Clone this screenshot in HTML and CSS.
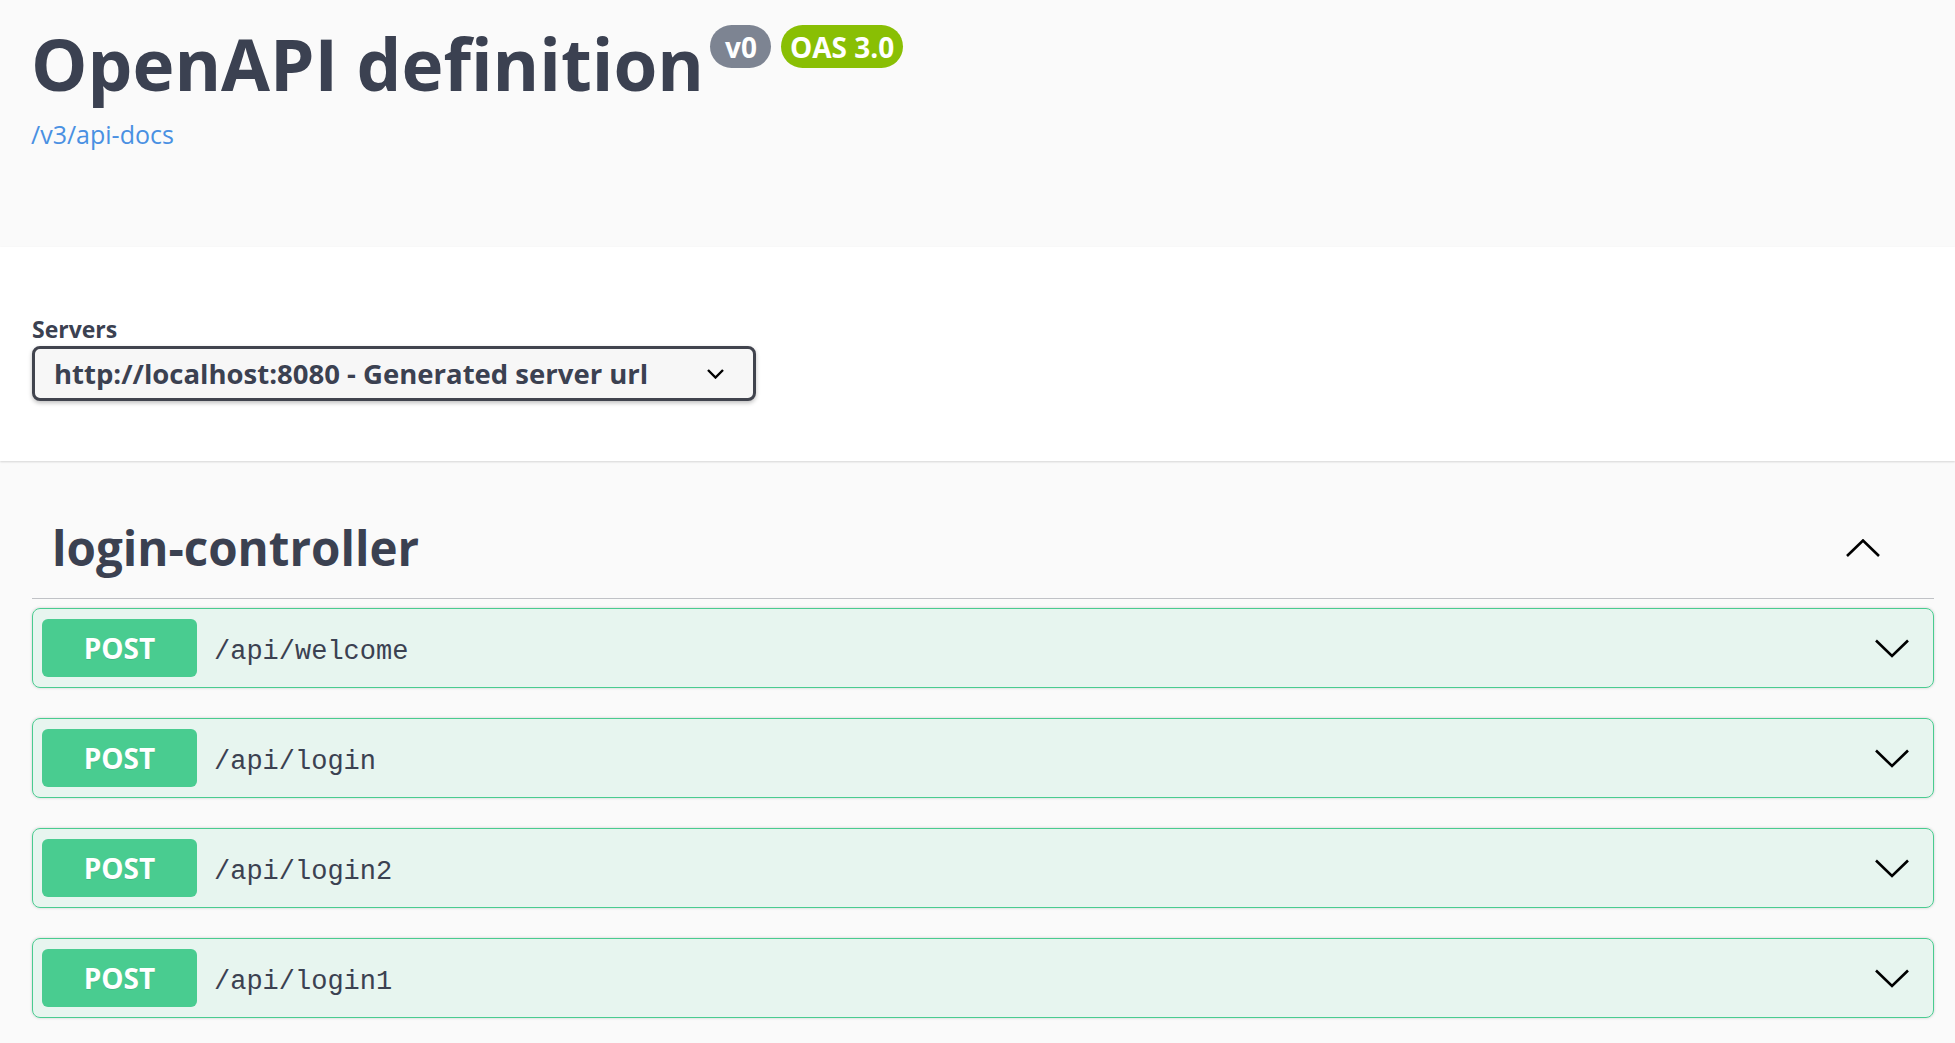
FILE: index.html
```html
<!DOCTYPE html>
<html lang="en">
<head>
<meta charset="utf-8">
<title>Swagger UI</title>
<link rel="stylesheet" href="styles.css">
</head>
<body>
<div class="info">
  <div class="title-row">
    <h2 class="title">OpenAPI definition</h2>
    <div class="badges">
      <span class="badge version">v0</span>
      <span class="badge oas">OAS 3.0</span>
    </div>
  </div>
  <a class="url" href="#">/v3/api-docs</a>
</div>

<div class="scheme">
  <label class="servers-label">Servers</label>
  <div class="select">
    <span>http://localhost:8080 - Generated server url</span>
    <svg class="select-arrow" width="17" height="10" viewBox="0 0 17 10"><path d="M1 1 L8.5 8.5 L16 1" fill="none" stroke="#000" stroke-width="2.4"/></svg>
  </div>
</div>

<div class="ops">
  <div class="tag">
    <h3 class="tag-name">login-controller</h3>
    <svg class="tag-arrow" width="34" height="18" viewBox="0 0 34 18"><path d="M1 17 L17 1.5 L33 17" fill="none" stroke="#000" stroke-width="2.6"/></svg>
  </div>

  <div class="opblock">
    <span class="method">POST</span>
    <span class="path">/api/welcome</span>
    <svg class="op-arrow" width="34" height="19" viewBox="0 0 34 19"><path d="M1 1.5 L17 17 L33 1.5" fill="none" stroke="#000" stroke-width="2.6"/></svg>
  </div>
  <div class="opblock">
    <span class="method">POST</span>
    <span class="path">/api/login</span>
    <svg class="op-arrow" width="34" height="19" viewBox="0 0 34 19"><path d="M1 1.5 L17 17 L33 1.5" fill="none" stroke="#000" stroke-width="2.6"/></svg>
  </div>
  <div class="opblock">
    <span class="method">POST</span>
    <span class="path">/api/login2</span>
    <svg class="op-arrow" width="34" height="19" viewBox="0 0 34 19"><path d="M1 1.5 L17 17 L33 1.5" fill="none" stroke="#000" stroke-width="2.6"/></svg>
  </div>
  <div class="opblock">
    <span class="method">POST</span>
    <span class="path">/api/login1</span>
    <svg class="op-arrow" width="34" height="19" viewBox="0 0 34 19"><path d="M1 1.5 L17 17 L33 1.5" fill="none" stroke="#000" stroke-width="2.6"/></svg>
  </div>
</div>
</body>
</html>
```

FILE: styles.css
```css
html, body {
  margin: 0;
  padding: 0;
}
body {
  background: #fafafa;
  font-family: "Open Sans", "Noto Sans", sans-serif;
  color: #3b4151;
}

.info {
  height: 247px;
  box-sizing: border-box;
  padding: 25px 21px 0 31px;
}
.title-row {
  display: flex;
  align-items: flex-start;
}
.title {
  margin: 3px 0 0;
  font-size: 71px;
  line-height: 72px;
  font-weight: 700;
  color: #3b4151;
}
.badges {
  display: flex;
  gap: 10px;
  margin-left: 6px;
}
.badge {
  height: 43px;
  box-sizing: border-box;
  padding: 0 9px;
  border-radius: 57px;
  color: #fff;
  font-size: 28px;
  font-weight: 700;
  line-height: 1;
  display: flex;
  align-items: center;
}
.version {
  background: #7d8492;
  padding: 0 14px 0 15px;
}
.oas {
  background: #89bf04;
}
.url {
  display: block;
  margin-top: 18px;
  font-size: 25px;
  line-height: 32px;
  color: #4990e2;
  text-decoration: none;
  width: max-content;
}

.scheme {
  background: #fff;
  box-shadow: 0 1px 2px 0 rgba(0, 0, 0, .15);
  height: 214px;
  box-sizing: border-box;
  padding: 66px 21px 0 32px;
  position: relative;
}
.servers-label {
  display: block;
  font-size: 23px;
  line-height: 32px;
  font-weight: 700;
  margin-bottom: 1px;
}
.select {
  width: 724px;
  height: 55px;
  box-sizing: border-box;
  border: 3px solid #41444e;
  border-radius: 8px;
  background: #f7f7f7;
  box-shadow: 0 2px 4px rgba(0, 0, 0, .25);
  display: flex;
  align-items: center;
  justify-content: space-between;
  padding: 0 29px 0 19px;
  font-size: 27.5px;
  font-weight: 700;
  color: #3b4151;
}

.ops {
  padding: 39px 21px 40px 32px;
}
.tag {
  display: flex;
  align-items: center;
  justify-content: space-between;
  padding: 16px 54px 18px 20px;
  border-bottom: 1px solid rgba(59, 65, 81, .3);
  margin-bottom: 9px;
}
.tag-name {
  margin: 0;
  font-size: 47.5px;
  line-height: 64px;
  font-weight: 700;
  color: #3b4151;
}
.tag-arrow {
  display: block;
}

.opblock {
  display: flex;
  align-items: center;
  background: rgba(73, 204, 144, .1);
  border: 1px solid #49cc90;
  border-radius: 8px;
  box-shadow: 0 0 3px rgba(0, 0, 0, .19);
  padding: 10px 24px 10px 9px;
  margin-bottom: 30px;
}
.method {
  width: 155px;
  height: 58px;
  flex: none;
  border-radius: 6px;
  background: #49cc90;
  color: #fff;
  font-size: 28px;
  font-weight: 700;
  display: flex;
  align-items: center;
  justify-content: center;
  text-shadow: 0 1px 0 rgba(0, 0, 0, .1);
}
.path {
  flex: 1;
  margin: 7px 0 0 17px;
  font-family: "Liberation Mono", "DejaVu Sans Mono", monospace;
  font-size: 27px;
  color: #3b4151;
}
.op-arrow {
  display: block;
  flex: none;
}
```
